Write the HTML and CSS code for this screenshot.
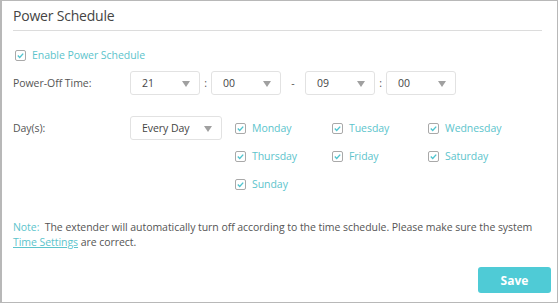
FILE: index.html
```html
<!DOCTYPE html>
<html lang="en">
<head>
  <meta charset="UTF-8">
  <title>Power Schedule</title>
  <link rel="stylesheet" href="styles.css">
</head>
<body>

<div class="panel">
  <h2 class="title">Power Schedule</h2>

  <label class="check enable">
    <span class="box"><svg width="9" height="9" viewBox="0 0 9 9"><path d="M1.8 4.6 L3.7 6.4 L7.2 2.6" fill="none" stroke="#4fc4cf" stroke-width="1.4"/></svg></span>
    Enable Power Schedule
  </label>

  <div class="row time-row">
    <div class="label">Power-Off Time:</div>
    <div class="select">21<span class="arrow"></span></div>
    <div class="sep">:</div>
    <div class="select">00<span class="arrow"></span></div>
    <div class="sep dash">-</div>
    <div class="select">09<span class="arrow"></span></div>
    <div class="sep">:</div>
    <div class="select">00<span class="arrow"></span></div>
  </div>

  <div class="row day-row">
    <div class="label">Day(s):</div>
    <div class="select wide">Every Day<span class="arrow"></span></div>
    <div class="days">
      <label class="check"><span class="box"><svg width="9" height="9" viewBox="0 0 9 9"><path d="M1.8 4.6 L3.7 6.4 L7.2 2.6" fill="none" stroke="#4fc4cf" stroke-width="1.4"/></svg></span>Monday</label>
      <label class="check"><span class="box"><svg width="9" height="9" viewBox="0 0 9 9"><path d="M1.8 4.6 L3.7 6.4 L7.2 2.6" fill="none" stroke="#4fc4cf" stroke-width="1.4"/></svg></span>Tuesday</label>
      <label class="check"><span class="box"><svg width="9" height="9" viewBox="0 0 9 9"><path d="M1.8 4.6 L3.7 6.4 L7.2 2.6" fill="none" stroke="#4fc4cf" stroke-width="1.4"/></svg></span>Wednesday</label>
      <label class="check"><span class="box"><svg width="9" height="9" viewBox="0 0 9 9"><path d="M1.8 4.6 L3.7 6.4 L7.2 2.6" fill="none" stroke="#4fc4cf" stroke-width="1.4"/></svg></span>Thursday</label>
      <label class="check"><span class="box"><svg width="9" height="9" viewBox="0 0 9 9"><path d="M1.8 4.6 L3.7 6.4 L7.2 2.6" fill="none" stroke="#4fc4cf" stroke-width="1.4"/></svg></span>Friday</label>
      <label class="check"><span class="box"><svg width="9" height="9" viewBox="0 0 9 9"><path d="M1.8 4.6 L3.7 6.4 L7.2 2.6" fill="none" stroke="#4fc4cf" stroke-width="1.4"/></svg></span>Saturday</label>
      <label class="check"><span class="box"><svg width="9" height="9" viewBox="0 0 9 9"><path d="M1.8 4.6 L3.7 6.4 L7.2 2.6" fill="none" stroke="#4fc4cf" stroke-width="1.4"/></svg></span>Sunday</label>
    </div>
  </div>

  <p class="note">
    <span class="note-label">Note:</span>&nbsp; The extender will automatically turn off according to the time schedule. Please make sure the system<br>
    <a href="#" class="link">Time Settings</a> are correct.
  </p>

  <div class="actions">
    <button class="btn">Save</button>
  </div>
</div>

</body>
</html>
```

FILE: styles.css
```css
* {
  box-sizing: border-box;
  font-family: "Open Sans", Arial, sans-serif;
}

body {
  margin: 0;
  background: #fff;
}

.panel {
  width: 558px;
  height: 303px;
  border: 1px solid #b8b8b8;
  border-left: 2px solid #b8b8b8;
  padding: 0 15px 0 11px;
  color: #555;
  font-size: 10.5px;
  letter-spacing: -0.05px;
}

.title {
  margin: 0;
  padding: 5px 0 5px 0;
  font-size: 14px;
  font-weight: normal;
  line-height: 19px;
  letter-spacing: -0.2px;
  color: #444;
  border-bottom: 1px solid #dcdcdc;
}

.check {
  display: flex;
  align-items: center;
  color: #5cc4cc;
  line-height: 16px;
}

.box {
  display: inline-flex;
  align-items: center;
  justify-content: center;
  width: 11px;
  height: 11px;
  border: 1px solid #a9a9a9;
  border-radius: 2px;
  margin-right: 6px;
}

.enable {
  margin-top: 16px;
  margin-left: 2px;
}

.row {
  display: flex;
  align-items: flex-start;
}

.label {
  width: 117px;
  line-height: 24px;
}

.time-row {
  margin-top: 8px;
}

.select {
  position: relative;
  width: 70px;
  height: 24px;
  line-height: 22px;
  padding-left: 11px;
  border: 1px solid #e2e2e2;
  border-radius: 3px;
  color: #444;
}

.arrow {
  position: absolute;
  right: 9px;
  top: 9px;
  width: 0;
  height: 0;
  border-left: 4px solid transparent;
  border-right: 4px solid transparent;
  border-top: 6px solid #a0a0a0;
}

.sep {
  width: 11px;
  text-align: center;
  line-height: 24px;
}

.sep.dash {
  width: 24px;
}

.day-row {
  margin-top: 21px;
}

.select.wide {
  width: 92px;
  margin-right: 13px;
}

.days {
  display: grid;
  grid-template-columns: 97px 96px 100px;
  grid-auto-rows: 28px;
  margin-top: -2px;
}

.days .check {
  line-height: 28px;
}

.note {
  margin: 22px 0 0 0;
  line-height: 15px;
  color: #555;
}

.note-label {
  color: #5cc4cc;
}

.link {
  color: #5cc4cc;
  text-decoration: underline;
}

.actions {
  display: flex;
  justify-content: flex-end;
  margin-top: 17px;
}

.btn {
  width: 73px;
  height: 26px;
  margin-right: -9px;
  background: #4fcbd6;
  color: #fff;
  border: none;
  border-radius: 3px;
  font-size: 12px;
  font-weight: bold;
  cursor: pointer;
}
```
